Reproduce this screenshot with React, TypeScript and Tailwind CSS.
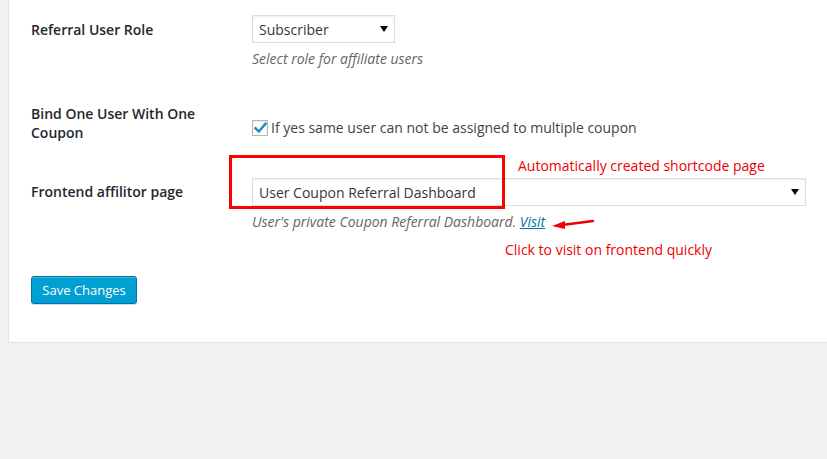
import React from "react";

function Caret() {
  return (
    <svg width="8" height="6" viewBox="0 0 8 6" className="block">
      <polygon points="0,0 8,0 4,6" fill="#000" />
    </svg>
  );
}

export default function App() {
  return (
    <div
      className="relative w-[827px] h-[459px] overflow-hidden bg-[#f1f1f1]"
      style={{ fontFamily: '"Open Sans", "Noto Sans", sans-serif' }}
    >
      <div className="ml-[8px] h-[343px] border-l border-b border-[#e3e3e3] bg-white pl-[22px] pt-[15px] text-[14px] text-[#23282d]">
        {/* Row 1 */}
        <div className="flex">
          <div className="w-[221px] shrink-0 pt-[5px] leading-[19px] font-semibold">Referral User Role</div>
          <div>
            <div className="flex h-[28px] w-[143px] items-center justify-between border border-[#ddd] bg-white pl-[6px] pr-[6px] text-[#32373c] shadow-[inset_0_1px_2px_rgba(0,0,0,0.07)]">
              <span className="leading-[19px]">Subscriber</span>
              <Caret />
            </div>
            <div className="mt-[5px] leading-[21px] italic text-[#666]">Select role for affiliate users</div>
          </div>
        </div>

        {/* Row 2 */}
        <div className="mt-[35px] flex">
          <div className="w-[221px] shrink-0 leading-[19px] font-semibold">
            Bind One User With One
            <br />
            Coupon
          </div>
          <div className="flex items-center pt-[10px]">
            <div className="flex h-[16px] w-[16px] items-center justify-center border border-[#b4b9be] bg-white shadow-[inset_0_1px_2px_rgba(0,0,0,0.1)]">
              <svg width="13" height="12" viewBox="0 0 13 12">
                <path d="M1.5 6.2 L4.8 9.5 L11.5 1.8" fill="none" stroke="#1e8cbe" strokeWidth="2.4" strokeLinecap="square" />
              </svg>
            </div>
            <span className="ml-[3px] leading-[16px] text-[#444]">If yes same user can not be assigned to multiple coupon</span>
          </div>
        </div>

        {/* Row 3 */}
        <div className="mt-[36px] flex">
          <div className="w-[221px] shrink-0 pt-[4px] leading-[19px] font-semibold">Frontend affilitor page</div>
          <div>
            <div className="flex h-[28px] w-[554px] items-center justify-between border border-[#ddd] bg-white pl-[6px] pr-[6px] text-[#32373c] shadow-[inset_0_1px_2px_rgba(0,0,0,0.07)]">
              <span className="leading-[19px]">User Coupon Referral Dashboard</span>
              <Caret />
            </div>
            <div className="mt-[5px] leading-[21px] italic text-[#666]">
              User's private Coupon Referral Dashboard.{" "}
              <a className="text-[#0073aa] underline">Visit</a>
            </div>
          </div>
        </div>

        {/* Button */}
        <div className="mt-[44px]">
          <button className="h-[28px] w-[106px] rounded-[3px] border border-[#0073aa] bg-[#00a0d2] text-[13px] leading-[26px] text-white shadow-[inset_0_1px_0_rgba(120,200,230,0.5),0_1px_0_rgba(0,0,0,0.15)]">
            Save Changes
          </button>
        </div>
      </div>

      {/* Annotations */}
      <div className="absolute left-[229px] top-[155px] h-[54px] w-[276px] border-[3px] border-[#ff0000]" />
      <div className="absolute left-[518px] top-[156px] text-[14px] leading-[20px] text-[#ee0000]">
        Automatically created shortcode page
      </div>
      <svg className="absolute left-[548px] top-[214px]" width="50" height="18" viewBox="0 0 50 18">
        <line x1="45" y1="7" x2="14" y2="11" stroke="#ee0000" strokeWidth="2.5" strokeLinecap="round" />
        <polygon points="4,12 17,7 17,15" fill="#ee0000" />
      </svg>
      <div className="absolute left-[505px] top-[240px] text-[14px] leading-[20px] text-[#ee0000]">
        Click to visit on frontend quickly
      </div>
    </div>
  );
}
